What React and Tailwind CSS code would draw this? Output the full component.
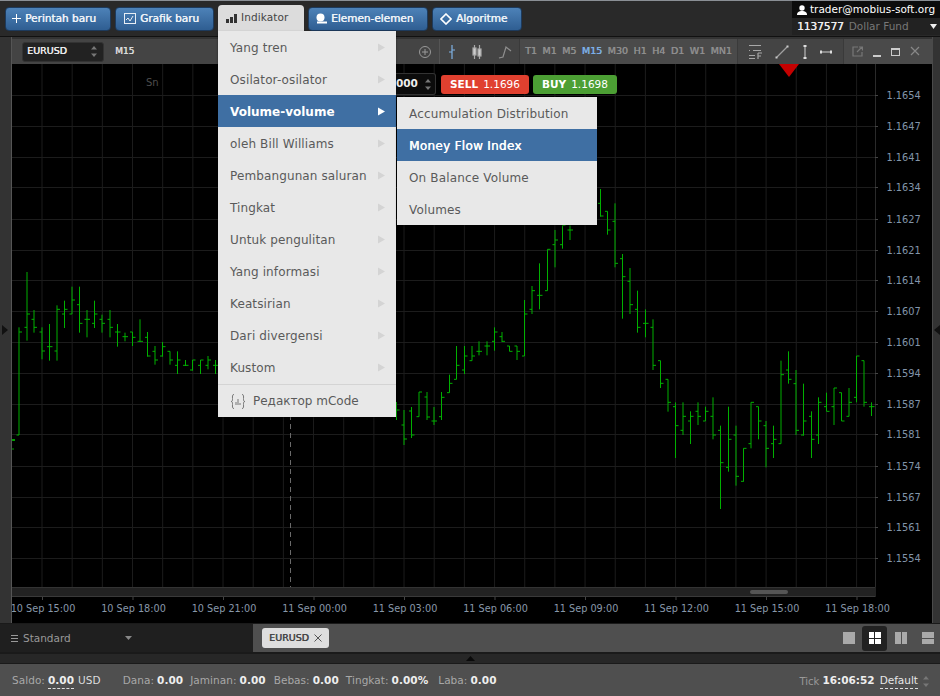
const F = "font-['DejaVu_Sans','Liberation_Sans',sans-serif]";
const FB = "[text-shadow:0.4px_0_0_currentColor]";

const z6 = (a) => a.map((v) => 260 + v / 3);
const z8 = (a) => a.map((v) => 180 + v / 3);
const z7 = (a) => a.map((v) => 340 + v / 3);
const bars = [
  [19, z6([202, 525, 525, 216])], [27, z6([36, 242, 202, 162])], [34, z6([150, 218, 178, 202])], [42, z6([202, 298, 216, 273])],
  [49.5, z6([192, 302, 260, 260])], [57, z6([136, 302, 273, 148])], [64.5, z6([122, 204, 162, 148])], [72, z6([80, 162, 162, 120])],
  [79.5, z6([80, 218, 134, 190])], [87, z6([150, 232, 178, 178])], [94.5, z6([122, 204, 190, 162])], [102, z6([164, 218, 178, 190])],
  [110, z6([150, 232, 178, 202])], [117.5, z6([192, 260, 216, 216])], [125, z6([218, 244, 230, 230])], [132.5, z6([216, 258, 216, 232])],
  [140, z6([178, 246, 244, 244])], [147.5, z6([216, 290, 232, 288])], [155, z6([258, 314, 274, 300])], [162.5, z6([246, 290, 288, 260])],
  [170, z6([274, 314, 274, 300])], [177.5, z6([274, 342, 316, 300])], [185.5, z6([300, 318, 316, 316])], [192.5, z6([300, 332, 330, 300])],
  [200.5, z6([300, 342, 316, 300])], [208, z6([288, 328, 316, 300])], [215.5, z6([300, 342, 316, 316])],
  [396.5, [402, 420, 410, 410]],
  [404, [410, 445, 425, 439]], [411.5, [407, 438, 411, 435]], [419, z8([636, 710, 710, 636])], [427, [392, 420, 397, 417]],
  [434, [407, 425, 421, 421]], [441.5, z8([636, 720, 710, 652])], [449.5, z8([584, 638, 638, 610])], [456.5, z8([498, 598, 598, 556])],
  [464.5, z8([498, 582, 570, 528])], [472, z8([498, 542, 542, 528])], [479, z8([484, 526, 514, 514])], [487, z8([484, 526, 498, 498])],
  [494.5, z8([442, 512, 484, 456])], [502, z8([456, 486, 470, 484])], [509.5, z8([498, 514, 498, 514])], [517, z8([498, 540, 498, 514])],
  [524.5, z8([360, 528, 528, 402])], [532, z8([318, 402, 388, 332])], [539.5, z8([250, 388, 346, 346])], [547.5, z8([208, 332, 332, 208])],
  [555, z8([150, 262, 194, 180])], [562.5, z8([136, 206, 194, 136])], [570, z8([136, 180, 150, 150])],
  [600.5, z8([27, 110, 70, 108])], [607.5, z8([94, 164, 94, 150])], [615, z8([70, 262, 124, 250])], [622.5, z8([222, 416, 236, 290])],
  [630, z8([264, 402, 304, 374])], [637.5, z8([332, 458, 388, 442])], [645.5, z8([388, 472, 430, 430])], [653, z8([418, 570, 442, 556])],
  [660.5, z8([542, 624, 542, 610])], [668, z7([118, 215, 118, 187])], [675.5, z7([187, 354, 200, 257])], [683, z7([187, 285, 271, 229])],
  [690.5, z7([214, 312, 243, 229])], [698, z7([187, 255, 214, 229])], [705.5, z7([200, 243, 243, 214])], [713, z7([172, 298, 229, 285])],
  [720.5, z7([257, 507, 271, 368])], [728.5, z7([200, 395, 382, 298])], [736, z7([257, 437, 285, 409])], [743.5, z7([325, 425, 424, 325])],
  [751, z7([187, 325, 311, 187])], [758.5, z7([200, 298, 200, 243])], [766, z7([243, 382, 257, 325])], [773.5, z7([257, 354, 311, 298])],
  [781, z7([62, 311, 311, 104])], [788.5, z7([34, 131, 90, 118])], [796, z7([90, 285, 131, 271])], [803.5, z7([131, 287, 285, 243])],
  [811.5, z7([214, 354, 229, 298])], [818.5, z7([172, 312, 285, 187])], [826.5, z7([158, 214, 200, 214])], [834, z7([144, 255, 200, 144])],
  [841.5, z7([158, 243, 158, 243])], [849, z7([144, 229, 229, 187])], [856.5, z7([48, 187, 172, 48])], [864, z7([62, 200, 62, 187])],
  [871.5, z7([187, 228, 200, 200])],
];
const prices = [
  ["1.1654", 95], ["1.1647", 126], ["1.1641", 157], ["1.1634", 187], ["1.1627", 219], ["1.1621", 250], ["1.1614", 280], ["1.1607", 311],
  ["1.1601", 342], ["1.1594", 373], ["1.1587", 404], ["1.1581", 434], ["1.1574", 466], ["1.1567", 497], ["1.1561", 527], ["1.1554", 558],
];
const times = ["10 Sep 15:00", "10 Sep 18:00", "10 Sep 21:00", "11 Sep 00:00", "11 Sep 03:00", "11 Sep 06:00", "11 Sep 09:00", "11 Sep 12:00", "11 Sep 15:00", "11 Sep 18:00"];
const vgrid = Array.from({ length: 30 }, (_, i) => 42 + i * 30.17);
const menu = ["Yang tren", "Osilator-osilator", "Volume-volume", "oleh Bill Williams", "Pembangunan saluran", "Tingkat", "Untuk pengulitan", "Yang informasi", "Keatsirian", "Dari divergensi", "Kustom"];
const sub = ["Accumulation Distribution", "Money Flow Index", "On Balance Volume", "Volumes"];
const tfs = ["T1", "M1", "M5", "M15", "M30", "H1", "H4", "D1", "W1", "MN1"];

function Chart() {
  return (
    <svg className="block w-[920px] h-[559px] overflow-visible" viewBox="12 64 920 559">
      <rect x="12" y="64" width="920" height="559" fill="#000" />
      {vgrid.map((x, i) => <line key={i} x1={x} x2={x} y1="64" y2="587" stroke="#1c1c1c" />)}
      {prices.map(([, y], i) => <line key={i} x1="12" x2="875" y1={y + 0.5} y2={y + 0.5} stroke="#1c1c1c" />)}
      <line x1="290.5" x2="290.5" y1="64" y2="587" stroke="#6a6a6a" strokeDasharray="5 4" />
      <polygon points="779,64 799,64 789,77" fill="#c40000" />
      <text x="146" y="86" fontSize="10" fill="#4d4d4d" fontFamily="DejaVu Sans">Sn</text>
      {bars.map(([x, [h, l, o, c]], i) => (
        <g key={i} stroke="#00b000" strokeWidth="1">
          <line x1={x} x2={x} y1={h} y2={l} />
          <line x1={x - 2.5} x2={x} y1={o} y2={o} />
          <line x1={x} x2={x + 3} y1={c} y2={c} />
        </g>
      ))}
      <line x1="12" x2="15" y1="440" y2="440" stroke="#00a000" strokeWidth="2" />
      <line x1="12" x2="14" y1="449" y2="449" stroke="#00a000" />
      <rect x="875" y="64" width="57" height="559" fill="#000" />
      <line x1="875.5" x2="875.5" y1="64" y2="597" stroke="#2a2a2a" />
      <rect x="12" y="587" width="864" height="10" fill="#222" />
      <line x1="12" x2="875" y1="587.5" y2="587.5" stroke="#333" />
      <line x1="12" x2="875" y1="596.5" y2="596.5" stroke="#3a3a3a" />
      <rect x="750" y="590" width="38" height="4" rx="2" fill="#555" />
      {prices.map(([p, y], i) => (
        <g key={i}>
          <line x1="875" x2="878" y1={y + 0.5} y2={y + 0.5} stroke="#444" />
          <text x="886.5" y={y + 3.5} fontSize="9.8" fill="#8295aa" fontFamily="DejaVu Sans">{p}</text>
        </g>
      ))}
      {times.map((t, i) => (
        <g key={i}>
          <line x1={42.5 + i * 90.5} x2={42.5 + i * 90.5} y1="597" y2="600" stroke="#444" />
          <text x={43 + i * 90.5} y="612" fontSize="9.7" fill="#8898aa" textAnchor="middle" fontFamily="DejaVu Sans">{t}</text>
        </g>
      ))}
    </svg>
  );
}

const TopBtn = ({ children, cls }) => (
  <button className={`h-6 ${cls} flex items-center justify-start gap-1 rounded-sm border border-[#1d3a5c] bg-gradient-to-b from-[#4d82b8] to-[#2f5e92] text-[10.5px] text-[#eef3f8] ${FB}`}>
    {children}
  </button>
);

const Tri = ({ c = "#cfcfcf" }) => (
  <svg width="9" height="9" viewBox="0 0 9 9"><polygon points="1,0.5 8,4.5 1,8.5" fill={c} /></svg>
);

const UpDown = () => (
  <svg width="6" height="11" viewBox="0 0 6 11" className="shrink-0"><polygon points="3,0 6,3.5 0,3.5" fill="#777" /><polygon points="3,11 6,7.5 0,7.5" fill="#777" /></svg>
);

const Ic = ({ children, w = 16, h = 16, s = "#a8a8a8" }) => (
  <svg width={w} height={h} viewBox={`0 0 ${w} ${h}`} fill="none" stroke={s} strokeWidth="1.2">{children}</svg>
);

export default function App() {
  return (
    <div className={`relative w-[940px] h-[696px] overflow-hidden flex flex-col bg-[#2a2a2a] ${F}`}>
      {/* top bar */}
      <div className="h-[37px] shrink-0 flex items-start justify-between border-t border-t-[#8a8f95] border-b border-b-[#111] bg-[#292929]">
        <div className="flex items-center gap-1 pl-[5px] pt-[5px]">
          <TopBtn cls="w-[106px] pl-[6px]">
            <svg width="9" height="9" viewBox="0 0 9 9" stroke="#fff" strokeWidth="1"><path d="M4.500 0v9M0 4.500h9" /></svg>
            Perintah baru
          </TopBtn>
          <TopBtn cls="w-[99px] pl-2">
            <svg width="12" height="11" viewBox="0 0 12 11" fill="none" stroke="#e8eef5" strokeWidth="1"><rect x="0.5" y="0.5" width="11" height="10" /><path d="M2 7l2-2 2 3 3-5" /></svg>
            Grafik baru
          </TopBtn>
          <div className="w-[86px] h-[26px] -mt-px pl-2 flex items-center justify-start gap-1 rounded-t-sm bg-[#dcdcdc] text-[10.5px] tracking-[0.1px] text-[#444]">
            <svg width="11" height="9" viewBox="0 0 11 9" fill="#333"><rect x="0" y="5" width="3" height="4" /><rect x="4" y="3" width="3" height="6" /><rect x="8" y="0" width="3" height="9" /></svg>
            Indikator
          </div>
          <TopBtn cls="w-[120px] pl-[7px]">
            <svg width="11" height="11" viewBox="0 0 11 11" fill="#fff"><circle cx="4.5" cy="4.5" r="4" /><rect x="1" y="8.5" width="10" height="2" /></svg>
            Elemen-elemen
          </TopBtn>
          <TopBtn cls="w-[90px] pl-[7px]">
            <svg width="12" height="12" viewBox="0 0 12 12" fill="none" stroke="#fff" strokeWidth="1.6"><path d="M6 1l5 5-5 5-5-5z" /></svg>
            Algoritme
          </TopBtn>
        </div>
        <div className="w-[148px] h-[34px] flex flex-col bg-[#0c0c0c]">
          <div className="h-[17px] flex items-center gap-[3px] pl-[5px] text-[10.5px] text-white">
            <svg width="10" height="10" viewBox="0 0 10 10" fill="#fff"><circle cx="5" cy="3" r="2.7" /><path d="M0 10c0-3 2-4 5-4s5 1 5 4z" /></svg>
            trader@mobius-soft.org
          </div>
          <div className="h-[17px] flex items-center justify-between bg-[#222] pl-[5px] pr-[3px] text-[10.5px]">
            <span><span className={`text-[#eee] ${FB}`}>1137577</span><span className="ml-[5px] text-[#777]">Dollar Fund</span></span>
            <svg width="7" height="5" viewBox="0 0 7 5"><polygon points="0,0 7,0 3.5,5" fill="#eee" /></svg>
          </div>
        </div>
      </div>

      {/* chart window */}
      <div className="flex-1 min-h-0 flex bg-[#333]">
        <div className="relative w-3 shrink-0 bg-[#333] border-r border-r-[#555]">
          <svg className="absolute left-[2px] top-[288px]" width="6" height="10" viewBox="0 0 6 10"><polygon points="0,0 6,5 0,10" fill="#111" /></svg>
        </div>
        <div className="w-[920px] shrink-0 flex flex-col">
          <div className="h-[27px] shrink-0 flex items-center bg-[#444] border-t-2 border-t-[#333] text-[#aaa]">
            <div className="flex items-center pl-[10px] w-[427px] h-full">
              <div className="w-[82px] h-5 flex items-center justify-between rounded-[3px] bg-[#222] border border-[#333] pl-1 pr-[6px] text-[9.5px] text-[#eee]">
                <span className={FB}>EURUSD</span> <UpDown />
              </div>
              <span className={`ml-[11px] text-[9px] text-[#ddd] ${FB}`}>M15</span>
              <div className="ml-auto flex items-center pr-[7px]">
                <svg width="14" height="14" viewBox="0 0 14 14" fill="none" stroke="#999"><circle cx="7" cy="7" r="5.500" /><path d="M7 4v6M4 7h6" /></svg>
              </div>
            </div>
            <div className="flex items-center justify-around w-[80px] h-full border-l border-l-[#555]">
              <Ic w={8} s="#7fb2e5"><path d="M4 1v14M1 8h3M4 6h3" /></Ic>
              <Ic w={12}><path d="M3.500 1v14M8.500 1v14" /><rect x="2" y="4" width="3" height="7" fill="#ccc" /><rect x="7" y="5" width="3" height="7" fill="#ccc" /></Ic>
              <Ic w={14} s="#8f8f8f"><path d="M1 14l4-1 3-10 5 4" /></Ic>
            </div>
            <div className={`flex items-center justify-between h-full bg-[#4a4a4a] w-[218px] px-[5px] border-l border-l-[#3a3a3a] text-[9.5px] text-[#8f8f8f] ${FB}`}>
              {tfs.map((t) => <span key={t} className={t === "M15" ? "text-[#7db0e6]" : ""}>{t}</span>)}
            </div>
            <div className="flex items-center justify-around w-[106px] h-full bg-[#444] border-l border-l-[#3a3a3a] px-1">
              <Ic w={15}><path d="M1 1.500h12M5 6.500h8M1 6.500h1M1 11.500h6M1 14.500h6" /><path d="M10 9h4M10 9v6M10 12h3" /></Ic>
              <Ic s="#a0a0a0"><path d="M3 13L13 3" /><rect x="1.500" y="12.500" width="2" height="2" fill="#ccc" stroke="none" /><rect x="12.500" y="1.500" width="2" height="2" fill="#ccc" stroke="none" /></Ic>
              <Ic w={6} s="#bbb"><path d="M3 2v12" /><rect x="1.500" y="1" width="3" height="2" fill="#ddd" stroke="none" /><rect x="1.500" y="13" width="3" height="2" fill="#ddd" stroke="none" /></Ic>
              <Ic w={14} s="#bbb"><path d="M2 8h10" /><rect x="1" y="6.500" width="2" height="3" fill="#ddd" stroke="none" /><rect x="11" y="6.500" width="2" height="3" fill="#ddd" stroke="none" /></Ic>
            </div>
            <div className="flex-1 flex items-center h-full bg-[#4a4a4a] border-l border-l-[#3a3a3a] pl-1">
              <div className="w-[19px] flex justify-center"><Ic w={11} h={11} s="#777"><path d="M6 1H1v9h9V6M5 6l5-5M7 1h3.500v3.500" /></Ic></div>
              <div className="w-[19px] flex justify-center"><div className="w-2 h-[2px] mt-2 bg-[#ccc]" /></div>
              <div className="w-[19px] flex justify-center"><div className="w-[9px] h-[8px] border border-[#ccc] border-t-2" /></div>
              <div className="w-[19px] flex justify-center"><Ic w={10} s="#888"><path d="M1 3l8 8M9 3l-8 8" /></Ic></div>
            </div>
          </div>
          <Chart />
        </div>
        <div className="relative flex-1 bg-[#333] border-l border-l-[#4a4a4a]">
          <svg className="absolute right-0 top-[288px]" width="6" height="10" viewBox="0 0 6 10"><polygon points="6,0 0,5 6,10" fill="#111" /></svg>
        </div>
      </div>

      {/* tabs */}
      <div className="h-[31px] shrink-0 flex border-t border-t-[#1a1a1a] border-b-2 border-b-[#1a1a1a]">
        <div className="w-[253px] flex items-center bg-[#1f1f1f] pl-[11px] pt-px text-[10.5px] text-[#999]">
          <svg width="7" height="7" viewBox="0 0 7 7" stroke="#999"><path d="M0 .5h7M0 3.500h7M0 6.500h7" /></svg>
          <span className="ml-[5px]">Standard</span>
          <svg className="ml-[54px] mb-[2px]" width="7" height="4" viewBox="0 0 7 4"><polygon points="0,0 7,0 3.5,4" fill="#888" /></svg>
        </div>
        <div className="flex-1 flex items-center justify-between bg-[#4f4f4f] pl-[9px]">
          <div className="w-[67px] h-5 flex items-center justify-center gap-[5px] rounded-[3px] bg-[#dedede] text-[9.5px] text-[#444]">
            <span className={FB}>EURUSD</span>
            <svg width="8" height="8" viewBox="0 0 8 8" stroke="#555"><path d="M.5 .5l7 7M7.500 .5l-7 7" /></svg>
          </div>
          <div className="flex items-center">
            <div className="w-[26px] h-[25px] flex items-center justify-center"><div className="w-3 h-3 bg-[#aaa]" /></div>
            <div className="w-[25px] h-[25px] grid place-items-center rounded-[3px] bg-[#222]">
              <div className="w-3 h-3 grid grid-cols-2 gap-px"><i className="bg-white" /><i className="bg-white" /><i className="bg-white" /><i className="bg-white" /></div>
            </div>
            <div className="w-[28px] h-[25px] grid place-items-center">
              <div className="w-3 h-3 grid grid-cols-2 gap-px"><i className="bg-[#aaa]" /><i className="bg-[#aaa]" /></div>
            </div>
            <div className="w-[25px] h-[25px] grid place-items-center">
              <div className="w-3 h-3 grid grid-rows-2 gap-px"><i className="bg-[#aaa]" /><i className="bg-[#aaa]" /></div>
            </div>
          </div>
        </div>
      </div>

      {/* splitter */}
      <div className="h-[10px] shrink-0 flex justify-center bg-[#272727] border-b border-b-[#1a1a1a]">
        <svg className="mt-[2px]" width="9" height="5" viewBox="0 0 9 5"><polygon points="0,5 9,5 4.5,0" fill="#0a0a0a" /></svg>
      </div>

      {/* status */}
      <div className="h-8 shrink-0 flex items-center justify-between bg-[#4f4f4f] pl-3 pr-[11px] pt-[2px] text-[10.5px] text-[#a8a8a8]">
        <div className="flex items-center tracking-[0.05px]">
          <span>Saldo:</span>
          <b className="ml-[3px] text-[#eee] border-b border-dashed border-b-[#ddd]">0.00</b>
          <span className="ml-[4px] text-[#ddd]">USD</span>
          <span className="ml-[22px]">Dana:</span><b className="ml-[3px] text-[#eee]">0.00</b>
          <span className="ml-[7px]">Jaminan:</span><b className="ml-[3px] text-[#eee]">0.00</b>
          <span className="ml-[8px]">Bebas:</span><b className="ml-[3px] text-[#eee]">0.00</b>
          <span className="ml-[7px]">Tingkat:</span><b className="ml-[3px] text-[#eee]">0.00%</b>
          <span className="ml-[10px]">Laba:</span><b className="ml-[3px] text-[#eee]">0.00</b>
        </div>
        <div className="flex items-center">
          <span className="text-[10px] text-[#999]">Tick</span><b className="ml-[3px] text-[#eee]">16:06:52</b>
          <span className="ml-[5px] text-[#e8e8e8] border-b border-dashed border-b-[#ddd]">Default</span>
          <span className="ml-[5px]"><UpDown /></span>
        </div>
      </div>

      {/* order box */}
      <div className="absolute left-[396px] top-[73px] w-[40px] h-[22px] flex items-center justify-between rounded-r-[3px] bg-[#0c0c0c] border border-[#333] border-l-0 pr-1 text-[10.5px] font-bold text-[#eee]">
        000 <UpDown />
      </div>
      <div className="absolute left-[441px] top-[75px] flex gap-1 text-[10.5px] text-white">
        <div className="w-[88px] h-[19px] flex items-center justify-center gap-[5px] rounded-[3px] bg-[#e0402f]"><b>SELL</b><span className="font-medium">1.1696</span></div>
        <div className="w-[84px] h-[19px] flex items-center justify-center gap-[5px] rounded-[3px] bg-[#4c9f34]"><b>BUY</b><span className="font-medium">1.1698</span></div>
      </div>

      {/* menu */}
      <div className="absolute left-[218px] top-[31px] w-[178px] flex flex-col bg-[#e8e8e8] shadow-[0_1px_2px_rgba(0,0,0,0.5)] text-[12px] tracking-[0.12px] text-[#5a5a5a]">
        {menu.map((m) => {
          const on = m === "Volume-volume";
          return (
            <div key={m} className={`h-8 pt-px flex items-center justify-between pl-3 pr-[10px] ${on ? "bg-[#3f6fa3] text-white font-bold tracking-normal" : ""}`}>
              {m}<Tri c={on ? "#ffffff" : "#d4d4d4"} />
            </div>
          );
        })}
        <div className="h-[33px] mt-px flex items-center gap-[7px] pl-3 border-t border-t-[#d4d4d4] tracking-normal">
          <svg width="16" height="15" viewBox="0 0 16 15" fill="none" stroke="#777" strokeWidth="1"><path d="M4 .5C2 .5 2.500 2.500 2.500 4.500S2.500 7.500 1 7.500c1.500 0 1.500 1 1.500 3s-.5 4 1.500 4M12 .5c2 0 1.500 2 1.500 4s0 3 1.500 3c-1.500 0-1.500 1-1.500 3s.5 4-1.500 4M6 8v3M8 5v6M10 9v2" /></svg>
          Редактор mCode
        </div>
      </div>
      <div className="absolute left-[397px] top-[97px] w-[200px] flex flex-col bg-[#e8e8e8] shadow-[0_1px_2px_rgba(0,0,0,0.5)] text-[12px] tracking-[0.16px] text-[#5a5a5a]">
        {sub.map((s) => (
          <div key={s} className={`h-8 pt-px flex items-center pl-3 ${s === "Money Flow Index" ? `bg-[#3f6fa3] text-white tracking-[0.3px] ${FB}` : ""}`}>{s}</div>
        ))}
      </div>
    </div>
  );
}
